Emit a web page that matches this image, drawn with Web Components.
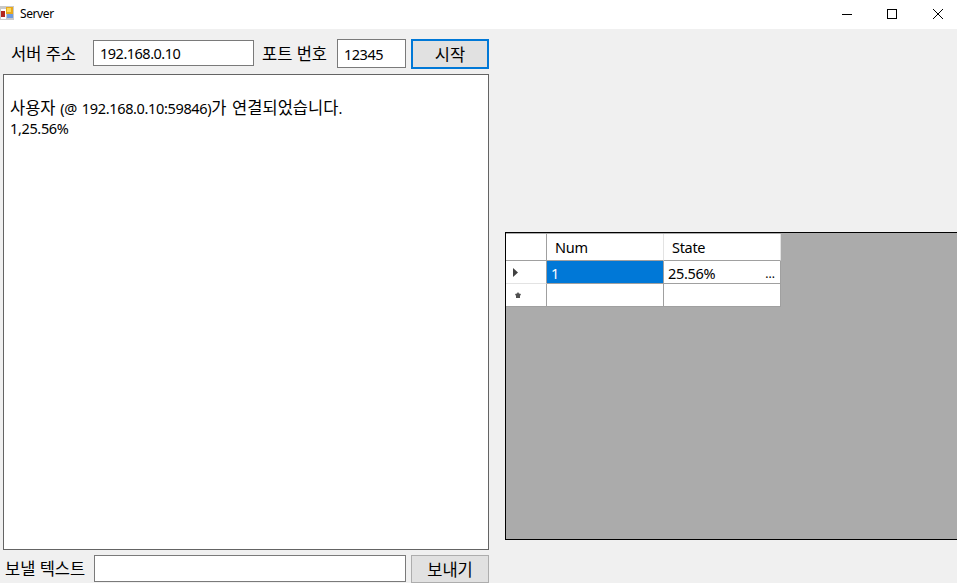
<!DOCTYPE html>
<html lang="ko">
<head>
<meta charset="utf-8">
<title>Server</title>
<style>
	html, body { margin: 0; padding: 0; height: 100%; overflow: hidden; background: #f0f0f0; }
	body { font: 14.5px "Noto Sans", "Noto Sans CJK KR", sans-serif; color: #000; }
</style>
</head>
<body>
<server-form></server-form>
<script>
const FONT = `"Noto Sans", "Noto Sans CJK KR", sans-serif`

class WinTitlebar extends HTMLElement {
	constructor() {
		super()
		this.attachShadow({ mode: "open" })
		this.shadowRoot.innerHTML = `
		<style>
		:host { display: flex; align-items: center; height: 29px; background: #fff; }
		svg { display: block; }
		.icon { margin-top: -3px; }
		.title { margin-left: 6px; font: 12px ${FONT}; letter-spacing: -.4px; color: #000; flex: 1; position: relative; top: -1px; }
		.btn { box-sizing: border-box; width: 45px; height: 29px; padding-left: 17px; display: flex; align-items: center; position: relative; top: -1px; }
		.btn.close { padding-left: 18px; margin-right: -3px; }
		</style>
		<svg class="icon" width="14" height="14" viewBox="0 0 14 14" shape-rendering="crispEdges">
			<rect x="0" y="0" width="14" height="14" fill="#c9c9c9"/>
			<rect x="1" y="3" width="5" height="10" fill="#fff"/>
			<rect x="1" y="5" width="4" height="6" fill="#b3261e"/>
			<rect x="6" y="1" width="7" height="7" fill="#e8a91c"/>
			<rect x="7" y="2" width="4" height="4" fill="#fbd75a"/>
			<rect x="7" y="8" width="6" height="4" fill="#6f9be0"/>
		</svg>
		<span class="title"><slot></slot></span>
		<span class="btn"><svg width="10" height="10" viewBox="0 0 10 10" shape-rendering="crispEdges"><rect x="0" y="5" width="10" height="1" fill="#000"/></svg></span>
		<span class="btn"><svg width="10" height="10" viewBox="0 0 10 10" shape-rendering="crispEdges"><path d="M.5.5h9v9h-9z" fill="none" stroke="#000"/></svg></span>
		<span class="btn close"><svg width="10" height="10" viewBox="0 0 10 10"><path d="M0 0l10 10M10 0L0 10" fill="none" stroke="#000"/></svg></span>
		`
	}
}

class WinInput extends HTMLElement {
	constructor() {
		super()
		this.attachShadow({ mode: "open" })
		this.shadowRoot.innerHTML = `
		<style>
		:host { display: flex; align-items: center; box-sizing: border-box; background: #fff; border: 1px solid #7a7a7a; padding-left: 6px; font: 14.5px ${FONT}; letter-spacing: -.5px; white-space: nowrap; overflow: hidden; }
		</style>
		<slot></slot>
		`
	}
}

class WinButton extends HTMLElement {
	constructor() {
		super()
		this.attachShadow({ mode: "open" })
		this.shadowRoot.innerHTML = `
		<style>
		:host { display: flex; align-items: center; justify-content: center; box-sizing: border-box; width: 78px; background: #e1e1e1; border: 1px solid #adadad; font: 14px ${FONT}; }
		:host([focused]) { border: 2px solid #0078d7; }
		</style>
		<slot></slot>
		`
	}
}

class LogBox extends HTMLElement {
	constructor() {
		super()
		this.attachShadow({ mode: "open" })
		this.shadowRoot.innerHTML = `
		<style>
		:host { display: block; box-sizing: border-box; background: #fff; border: 1px solid #646464; padding: 23px 6px 0; font: 14.5px/20px ${FONT}; letter-spacing: -.35px; }
		</style>
		<slot></slot>
		`
	}
}

class DataGrid extends HTMLElement {
	constructor() {
		super()
		this.attachShadow({ mode: "open" })
		this.shadowRoot.innerHTML = `
		<style>
		:host { display: block; box-sizing: border-box; background: #ababab; border: 1px solid #000; font: 14.5px ${FONT}; letter-spacing: -.3px; }
		.table { display: grid; grid-template-columns: 41px 117px 117px; grid-template-rows: 27px 23px 23px; width: 275px; margin: 1px 0 0 0; }
		.c { box-sizing: border-box; display: flex; align-items: center; background: #fff; white-space: nowrap; overflow: hidden; border-right: 1px solid #a0a0a0; border-bottom: 1px solid #a0a0a0; padding-left: 4px; }
		.head { border-right-color: #e3e3e3; padding-left: 8px; }
		.corner { border-right-color: #a0a0a0; }
		.rh { padding-left: 7px; border-bottom-color: #e3e3e3; }
		.rh.last { border-bottom-color: #a0a0a0; padding-left: 9px; }
		.sel { background: #0078d7; color: #fff; padding-top: 1px; }
		.state { justify-content: space-between; padding-right: 5px; padding-top: 1px; }
		.dots { align-self: flex-end; font-size: 12px; line-height: 18px; letter-spacing: 0; }
		svg { display: block; }
		</style>
		<div class="table">
			<div class="c head corner"></div>
			<div class="c head">Num</div>
			<div class="c head">State</div>
			<div class="c rh"><svg width="5" height="9" viewBox="0 0 5 9"><path d="M0 0l5 4.5L0 9z" fill="#404040"/></svg></div>
			<div class="c sel">1</div>
			<div class="c state">25.56%<span class="dots">...</span></div>
			<div class="c rh last"><svg width="6" height="6" viewBox="0 0 6 6"><path d="M3 0l1 1.5 2 .5-1 2v2H1V4L0 2l2-.5z" fill="#505050"/></svg></div>
			<div class="c"></div>
			<div class="c"></div>
		</div>
		`
	}
}

class ServerForm extends HTMLElement {
	constructor() {
		super()
		this.attachShadow({ mode: "open" })
		this.shadowRoot.innerHTML = `
		<style>
		:host { display: block; height: 583px; overflow: hidden; background: #f0f0f0; font: 14.5px ${FONT}; color: #000; }
		.ko { font-size: 16.5px; letter-spacing: 0; }
		.body { display: flex; height: 554px; }
		.left { width: 486px; flex: none; margin-left: 3px; display: flex; flex-direction: column; }
		.top { display: flex; align-items: flex-start; height: 45px; padding-top: 10px; box-sizing: border-box; }
		.bottom { display: flex; align-items: flex-start; margin-top: 5px; height: 28px; }
		.lbl { white-space: nowrap; flex: none; }
		.top .lbl { line-height: 29px; }
		.addr-lbl { margin-left: 8px; width: 82px; }
		.addr { width: 161px; height: 26px; margin-top: 1px; }
		.port-lbl { margin-left: 8px; width: 75px; }
		.port { width: 69px; height: 29px; }
		.start { height: 30px; margin-left: 5px; }
		log-box { flex: 1; width: 486px; }
		.line { height: 20px; white-space: nowrap; }
		.wide { word-spacing: 1.4px; }
		.send-lbl { margin-left: 2px; width: 89px; line-height: 27px; }
		.msg { width: 312px; height: 27px; }
		.send { height: 28px; margin-left: 5px; }
		.right { padding: 203px 0 0 16px; flex: 1; min-width: 0; }
		data-grid { height: 308px; margin-right: -10px; }
		</style>
		<win-titlebar>Server</win-titlebar>
		<div class="body">
			<div class="left">
				<div class="top">
					<span class="lbl addr-lbl ko">서버 주소</span>
					<win-input class="addr">192.168.0.10</win-input>
					<span class="lbl port-lbl ko">포트 번호</span>
					<win-input class="port">12345</win-input>
					<win-button class="start" focused><span class="ko">시작</span></win-button>
				</div>
				<log-box>
					<div class="line wide"><span class="ko">사용자</span> (@ 192.168.0.10:59846)<span class="ko">가 연결되었습니다</span>.</div>
					<div class="line">1,25.56%</div>
				</log-box>
				<div class="bottom">
					<span class="lbl send-lbl ko">보낼 텍스트</span>
					<win-input class="msg"></win-input>
					<win-button class="send"><span class="ko">보내기</span></win-button>
				</div>
			</div>
			<div class="right"><data-grid></data-grid></div>
		</div>
		`
	}
}

customElements.define("win-titlebar", WinTitlebar)
customElements.define("win-input", WinInput)
customElements.define("win-button", WinButton)
customElements.define("log-box", LogBox)
customElements.define("data-grid", DataGrid)
customElements.define("server-form", ServerForm)
</script>
</body>
</html>
